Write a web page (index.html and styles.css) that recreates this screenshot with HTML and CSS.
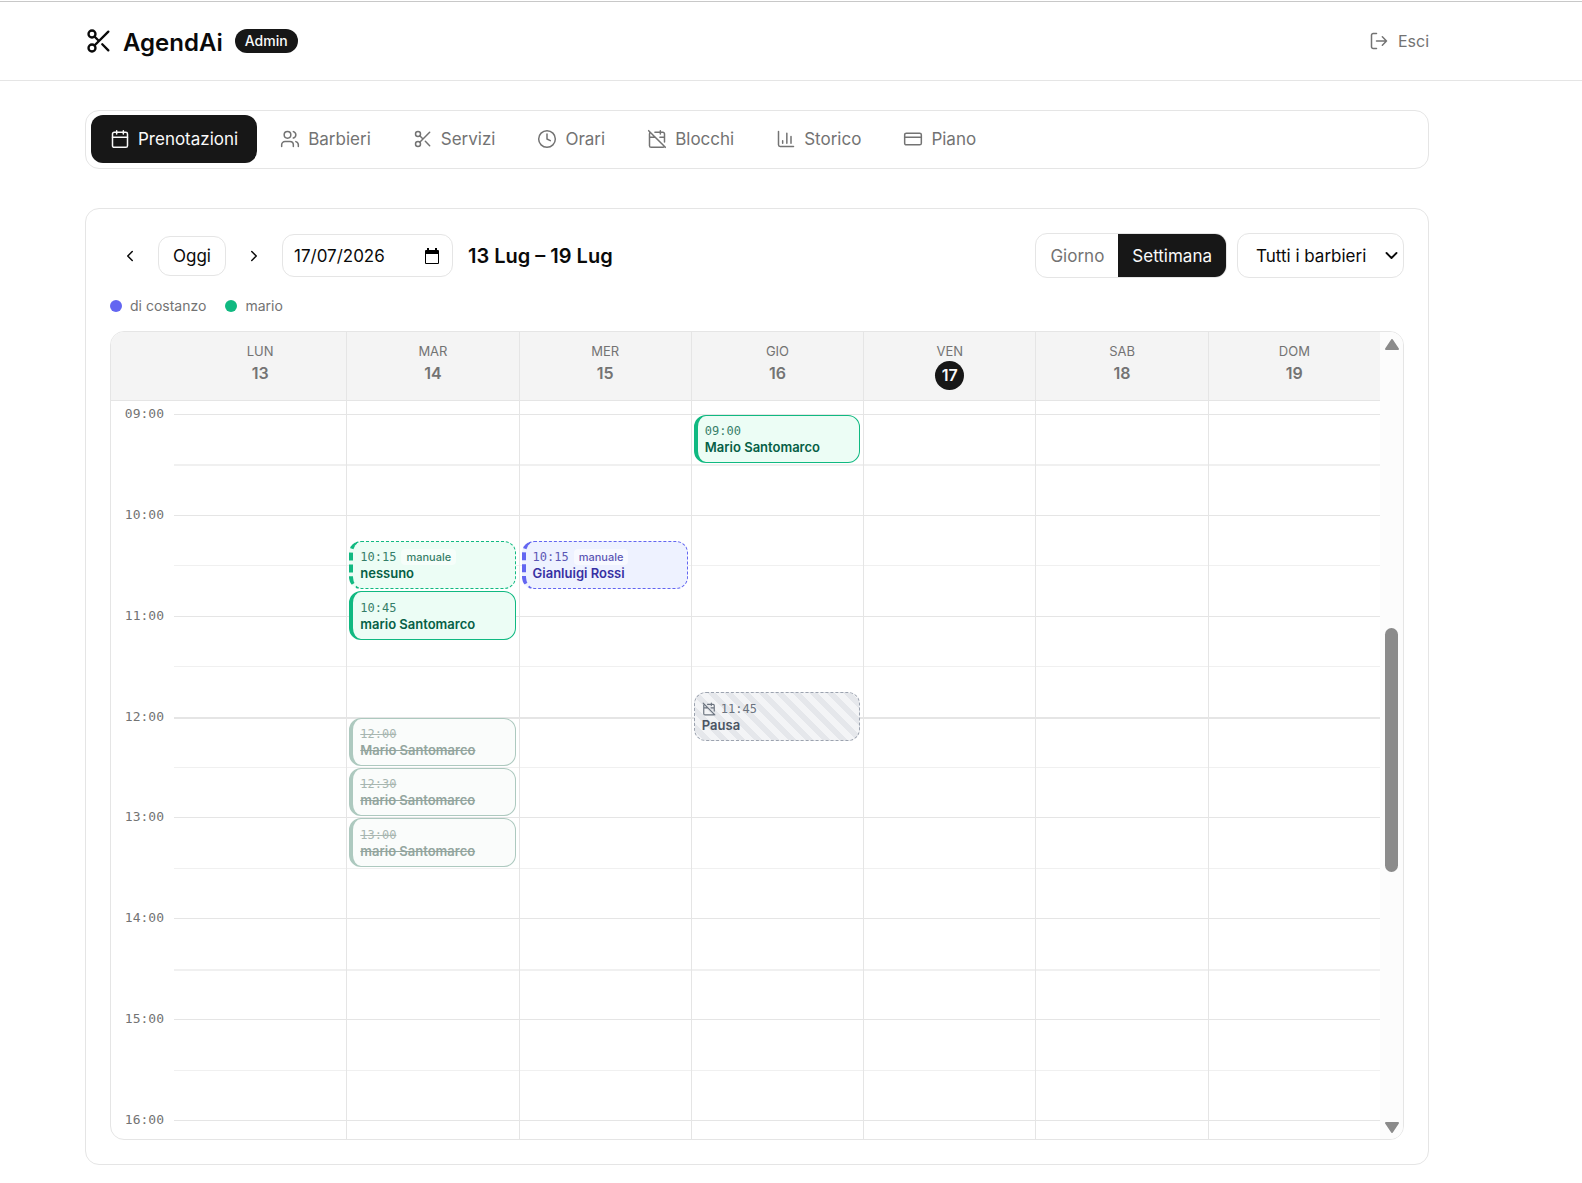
FILE: index.html
```html
<!DOCTYPE html>
<html lang="it">
<head>
<meta charset="utf-8">
<meta name="viewport" content="width=device-width, initial-scale=1">
<title>AgendAi – Admin</title>
<link rel="stylesheet" href="styles.css">
</head>
<body>
<svg class="sprite" aria-hidden="true">
  <symbol id="scissors" viewBox="0 0 24 24"><circle cx="6" cy="6" r="3"/><path d="M8.12 8.12 12 12M20 4 8.12 15.88M14.8 14.8 20 20"/><circle cx="6" cy="18" r="3"/></symbol>
  <symbol id="calendar" viewBox="0 0 24 24"><path d="M8 2v4M16 2v4M3 10h18"/><rect x="3" y="4" width="18" height="18" rx="2"/></symbol>
  <symbol id="users" viewBox="0 0 24 24"><path d="M16 21v-2a4 4 0 0 0-4-4H6a4 4 0 0 0-4 4v2M22 21v-2a4 4 0 0 0-3-3.87M16 3.13a4 4 0 0 1 0 7.75"/><circle cx="9" cy="7" r="4"/></symbol>
  <symbol id="clock" viewBox="0 0 24 24"><circle cx="12" cy="12" r="10"/><path d="M12 6v6l4 2"/></symbol>
  <symbol id="calendar-off" viewBox="0 0 24 24"><path d="M4.2 4.2A2 2 0 0 0 3 6v14a2 2 0 0 0 2 2h14a2 2 0 0 0 1.82-1.18M21 15.5V6a2 2 0 0 0-2-2H9.5M16 2v4M3 10h7M21 10h-5.5M2 2l20 20"/></symbol>
  <symbol id="chart" viewBox="0 0 24 24"><path d="M3 3v16a2 2 0 0 0 2 2h16M18 17V9M13 17V5M8 17v-3"/></symbol>
  <symbol id="card" viewBox="0 0 24 24"><rect x="2" y="5" width="20" height="14" rx="2"/><path d="M2 10h20"/></symbol>
  <symbol id="logout" viewBox="0 0 24 24"><path d="M9 21H5a2 2 0 0 1-2-2V5a2 2 0 0 1 2-2h4M16 17l5-5-5-5M21 12H9"/></symbol>
  <symbol id="left" viewBox="0 0 24 24"><path d="m15 18-6-6 6-6"/></symbol>
  <symbol id="right" viewBox="0 0 24 24"><path d="m9 18 6-6-6-6"/></symbol>
  <symbol id="down" viewBox="0 0 24 24"><path d="m4 8 8 8 8-8"/></symbol>
</svg>

<header class="topbar">
  <div class="brand">
    <svg class="icon icon-logo"><use href="#scissors"/></svg>
    <span class="brand-name">AgendAi</span>
    <span class="badge">Admin</span>
  </div>
  <button class="logout" type="button"><svg class="icon"><use href="#logout"/></svg>Esci</button>
</header>

<main class="page">
  <nav class="tabs">
    <a class="tab tab-active" href="#prenotazioni"><svg class="icon"><use href="#calendar"/></svg>Prenotazioni</a>
    <a class="tab" href="#barbieri"><svg class="icon"><use href="#users"/></svg>Barbieri</a>
    <a class="tab" href="#servizi"><svg class="icon"><use href="#scissors"/></svg>Servizi</a>
    <a class="tab" href="#orari"><svg class="icon"><use href="#clock"/></svg>Orari</a>
    <a class="tab" href="#blocchi"><svg class="icon"><use href="#calendar-off"/></svg>Blocchi</a>
    <a class="tab" href="#storico"><svg class="icon"><use href="#chart"/></svg>Storico</a>
    <a class="tab" href="#piano"><svg class="icon"><use href="#card"/></svg>Piano</a>
  </nav>

  <section class="panel">
    <div class="toolbar">
      <button class="arrow" type="button" aria-label="Precedente"><svg class="icon icon-arrow"><use href="#left"/></svg></button>
      <button class="today" type="button">Oggi</button>
      <button class="arrow" type="button" aria-label="Successivo"><svg class="icon icon-arrow"><use href="#right"/></svg></button>
      <label class="date">
        <input class="date-input" type="text" value="17/07/2026" aria-label="Data">
        <svg class="date-icon" viewBox="0 0 14 16"><path fill-rule="evenodd" d="M2 0h2v2h6V0h2v2h1a1 1 0 0 1 1 1v12a1 1 0 0 1-1 1H1a1 1 0 0 1-1-1V3a1 1 0 0 1 1-1h1ZM1 6v9h12V6Z"/></svg>
      </label>
      <h1 class="range">13 Lug – 19 Lug</h1>
      <div class="filters">
        <div class="segmented">
          <button class="segment" type="button">Giorno</button>
          <button class="segment segment-active" type="button">Settimana</button>
        </div>
        <label class="picker">
          <select class="picker-select" aria-label="Barbiere"><option>Tutti i barbieri</option><option>di costanzo</option><option>mario</option></select>
          <svg class="icon picker-icon"><use href="#down"/></svg>
        </label>
      </div>
    </div>

    <ul class="legend">
      <li class="legend-item"><span class="dot dot-indigo"></span>di costanzo</li>
      <li class="legend-item"><span class="dot dot-green"></span>mario</li>
    </ul>

    <div class="calendar">
      <div class="week">
        <div class="days">
          <div class="day day-first"><span>LUN</span><span class="day-number">13</span></div>
          <div class="day"><span>MAR</span><span class="day-number">14</span></div>
          <div class="day"><span>MER</span><span class="day-number">15</span></div>
          <div class="day"><span>GIO</span><span class="day-number">16</span></div>
          <div class="day"><span>VEN</span><span class="day-number day-today">17</span></div>
          <div class="day"><span>SAB</span><span class="day-number">18</span></div>
          <div class="day"><span>DOM</span><span class="day-number">19</span></div>
        </div>
        <!-- Rows: one per quarter of an hour from 09:00 (--slot 0); columns: --day 1 (lun) to 7 (dom) -->
        <div class="grid">
          <div class="line" style="--slot:0"></div>
          <div class="line line-half line-strong" style="--slot:2"></div>
          <div class="line" style="--slot:4"></div>
          <div class="line line-half" style="--slot:6"></div>
          <div class="line" style="--slot:8"></div>
          <div class="line line-half" style="--slot:10"></div>
          <div class="line line-strong" style="--slot:12"></div>
          <div class="line line-half" style="--slot:14"></div>
          <div class="line" style="--slot:16"></div>
          <div class="line line-half" style="--slot:18"></div>
          <div class="line" style="--slot:20"></div>
          <div class="line line-half line-strong" style="--slot:22"></div>
          <div class="line" style="--slot:24"></div>
          <div class="line line-half" style="--slot:26"></div>
          <div class="line" style="--slot:28"></div>

          <div class="column" style="--day:2"></div>
          <div class="column" style="--day:3"></div>
          <div class="column" style="--day:4"></div>
          <div class="column" style="--day:5"></div>
          <div class="column" style="--day:6"></div>
          <div class="column" style="--day:7"></div>

          <time class="hour" style="--slot:0">09:00</time>
          <time class="hour" style="--slot:4">10:00</time>
          <time class="hour" style="--slot:8">11:00</time>
          <time class="hour" style="--slot:12">12:00</time>
          <time class="hour" style="--slot:16">13:00</time>
          <time class="hour" style="--slot:20">14:00</time>
          <time class="hour" style="--slot:24">15:00</time>
          <time class="hour" style="--slot:28">16:00</time>

          <button type="button" class="event event-green" style="--day:4;--slot:0"><span class="event-time">09:00</span><span class="event-name">Mario Santomarco</span></button>
          <button type="button" class="event event-green event-manual" style="--day:2;--slot:5"><span class="event-time">10:15<span class="tag">manuale</span></span><span class="event-name">nessuno</span></button>
          <button type="button" class="event event-indigo event-manual" style="--day:3;--slot:5"><span class="event-time">10:15<span class="tag">manuale</span></span><span class="event-name">Gianluigi Rossi</span></button>
          <button type="button" class="event event-green" style="--day:2;--slot:7"><span class="event-time">10:45</span><span class="event-name">mario Santomarco</span></button>
          <button type="button" class="event event-block" style="--day:4;--slot:11"><span class="event-time"><svg class="icon icon-small"><use href="#calendar-off"/></svg>11:45</span><span class="event-name">Pausa</span></button>
          <button type="button" class="event event-cancelled" style="--day:2;--slot:12"><span class="event-time">12:00</span><span class="event-name">Mario Santomarco</span></button>
          <button type="button" class="event event-cancelled" style="--day:2;--slot:14"><span class="event-time">12:30</span><span class="event-name">mario Santomarco</span></button>
          <button type="button" class="event event-cancelled" style="--day:2;--slot:16"><span class="event-time">13:00</span><span class="event-name">mario Santomarco</span></button>
        </div>
      </div>
      <div class="scrollbar" aria-hidden="true">
        <svg class="scroll-arrow" viewBox="0 0 14 11"><path d="M7 1 13 10H1Z"/></svg>
        <div class="scroll-track"><div class="scroll-thumb"></div></div>
        <svg class="scroll-arrow" viewBox="0 0 14 11"><path d="M7 10 1 1H13Z"/></svg>
      </div>
    </div>
  </section>
</main>
</body>
</html>
```
FILE: styles.css
```css
:root {
  --ink: #171717;
  --muted: #737373;
  --line: #e5e5e5;
  --gutter: 63px;
  --mono: "DejaVu Sans Mono", monospace;
}

* { box-sizing: border-box; }

body {
  margin: 0;
  padding-top: 1px;
  background: #fff;
  color: #0a0a0a;
  font: 17px/24px Inter, sans-serif;
}

button, input, select {
  margin: 0;
  padding: 0;
  border: 0;
  background: none;
  color: inherit;
  font: inherit;
}

.sprite { display: none; }

.icon {
  flex: none;
  width: 20px;
  height: 20px;
  fill: none;
  stroke: currentColor;
  stroke-width: 2;
  stroke-linecap: round;
  stroke-linejoin: round;
}
.icon-logo { width: 28px; height: 28px; }
.icon-arrow { width: 18px; height: 18px; }
.icon-small { width: 14px; height: 14px; }

/* Header */
.topbar {
  display: flex;
  align-items: center;
  justify-content: space-between;
  height: 80px;
  padding: 0 153px 0 85px;
  border-top: 1px solid #c8c8c8;
  border-bottom: 1px solid var(--line);
}
.brand { display: flex; align-items: center; }
.brand-name {
  margin: 0 12px 0 10px;
  padding-top: 3px;
  font-size: 24px;
  font-weight: 600;
}
.badge {
  padding: 0 10px;
  border-radius: 12px;
  background: var(--ink);
  color: #fafafa;
  font-size: 14px;
  font-weight: 500;
}
.logout {
  display: flex;
  align-items: center;
  gap: 9px;
  color: var(--muted);
  font-size: 16px;
}
.logout .icon { stroke-width: 1.8; }

/* Page */
.page { padding: 29px 153px 18px 85px; }

.tabs {
  display: flex;
  gap: 4px;
  padding: 4px 5px 5px;
  border: 1px solid var(--line);
  border-radius: 14px;
}
.tab {
  display: flex;
  align-items: center;
  gap: 8px;
  height: 48px;
  padding: 0 19px;
  border-radius: 12px;
  color: var(--muted);
  text-decoration: none;
}
.tab .icon { stroke-width: 1.8; }
.tab-active { background: var(--ink); color: #fafafa; }

.panel {
  margin-top: 39px;
  padding: 24px;
  border: 1px solid var(--line);
  border-radius: 14px;
}

/* Toolbar */
.toolbar { display: flex; align-items: center; gap: 8px; }
.arrow {
  display: grid;
  place-items: center;
  width: 40px;
  height: 40px;
}
.today {
  height: 40px;
  padding: 0 14px;
  border: 1px solid var(--line);
  border-radius: 12px;
}
.date {
  display: flex;
  align-items: center;
  width: 171px;
  height: 43px;
  padding: 0 13px 0 11px;
  border: 1px solid var(--line);
  border-radius: 12px;
}
.date-input { flex: 1; min-width: 0; outline: 0; }
.date-icon { width: 14px; height: 16px; }
.range {
  margin: 0 0 0 7px;
  font-size: 20px;
  font-weight: 600;
}
.filters { display: flex; gap: 10px; margin-left: auto; }
.segmented {
  display: flex;
  height: 45px;
  border: 1px solid var(--line);
  border-radius: 12px;
  overflow: hidden;
}
.segment { padding: 0 14px; color: var(--muted); }
.segment-active { background: var(--ink); color: #fafafa; }
.picker {
  display: flex;
  align-items: center;
  width: 167px;
  height: 45px;
  padding-right: 4px;
  border: 1px solid var(--line);
  border-radius: 12px;
}
.picker-select {
  flex: 1;
  min-width: 0;
  height: 100%;
  padding-left: 18px;
  appearance: none;
}
.picker-icon { width: 15px; height: 15px; stroke-width: 3; }

/* Legend */
.legend {
  display: flex;
  gap: 19px;
  margin: 16px 0 13px;
  padding: 0;
  color: var(--muted);
  font-size: 14px;
  line-height: 24px;
  list-style: none;
}
.legend-item { display: flex; align-items: center; gap: 8px; }
.dot { width: 12px; height: 12px; border-radius: 50%; }
.dot-indigo { background: #6366f1; }
.dot-green { background: #10b981; }

/* Calendar */
.calendar {
  display: flex;
  border: 1px solid var(--line);
  border-radius: 14px;
  overflow: hidden;
}
.week { flex: 1; min-width: 0; }
.days {
  display: grid;
  grid-template-columns: var(--gutter) repeat(7, 1fr);
  height: 69px;
  border-bottom: 1px solid var(--line);
  background: #f4f4f4;
}
.day {
  display: flex;
  flex-direction: column;
  align-items: center;
  padding-top: 9px;
  border-left: 1px solid var(--line);
  color: var(--muted);
  font-size: 13px;
  line-height: 20px;
}
.day-first { grid-column: 2; border-left: 0; }
.day-number {
  width: 29px;
  height: 29px;
  font-size: 16px;
  font-weight: 600;
  line-height: 24px;
  text-align: center;
}
.day-today {
  border-radius: 50%;
  background: var(--ink);
  color: #fafafa;
  line-height: 29px;
}

.grid {
  display: grid;
  grid-template-columns: var(--gutter) repeat(7, 1fr);
  grid-template-rows: 13px repeat(28, 1fr) 19px;
  height: 738px;
}
.line {
  grid-area: calc(var(--slot) + 2) / 2 / auto / -1;
  align-self: start;
  height: 1px;
  background: var(--line);
}
.line-half { background: #f0f0f0; }
.line-strong { height: 2px; }
.column {
  grid-area: 1 / calc(var(--day) + 1) / -1;
  border-left: 1px solid var(--line);
}
.hour {
  grid-area: calc(var(--slot) + 2) / 1;
  align-self: start;
  margin-top: -9px;
  padding-right: 10px;
  color: var(--muted);
  font: 13px/18px var(--mono);
  text-align: right;
}

.event {
  grid-area: calc(var(--slot) + 2) / calc(var(--day) + 1) / span 2;
  display: flex;
  flex-direction: column;
  justify-content: center;
  min-width: 0;
  margin: 1px 3px;
  padding: 1px 7px 0;
  border: 1px solid;
  border-left-width: 4px;
  border-radius: 12px;
  text-align: left;
}
.event-time {
  display: flex;
  align-items: center;
  gap: 5px;
  font: 12px/16px var(--mono);
  opacity: .8;
}
.event-name { font-size: 13px; font-weight: 600; line-height: 17px; }
.tag {
  padding: 0 5px;
  border-radius: 4px;
  background: rgb(255 255 255 / .7);
  font: 500 11px/16px Inter, sans-serif;
}
.event-green { border-color: #10b981; background: #ecfdf5; color: #065f46; }
.event-indigo { border-color: #6366f1; background: #eef2ff; color: #3730a3; }
.event-manual { border-style: dashed; }
.event-cancelled {
  border-color: #adc9bf;
  background: #fafcfb;
  color: #93a59e;
}
.event-cancelled .event-time, .event-cancelled .event-name { text-decoration: line-through; }
.event-block {
  border: 1px dashed #9ca3af;
  background: repeating-linear-gradient(45deg, #f3f4f6 0 6px, #e5e7eb 6px 12px);
  color: #4b5563;
}

/* Scrollbar */
.scrollbar {
  display: flex;
  flex-direction: column;
  align-items: center;
  width: 23px;
  padding: 7px 0 6px;
  background: #fcfcfc;
}
.scroll-arrow {
  width: 14px;
  height: 11px;
  fill: #8b8b8b;
  stroke: #8b8b8b;
  stroke-width: 2;
  stroke-linejoin: round;
}
.scroll-track {
  display: grid;
  flex: 1;
  grid-template-rows: 278fr 243fr 250fr;
}
.scroll-thumb {
  grid-row: 2;
  width: 13px;
  border-radius: 7px;
  background: #8b8b8b;
}
```
